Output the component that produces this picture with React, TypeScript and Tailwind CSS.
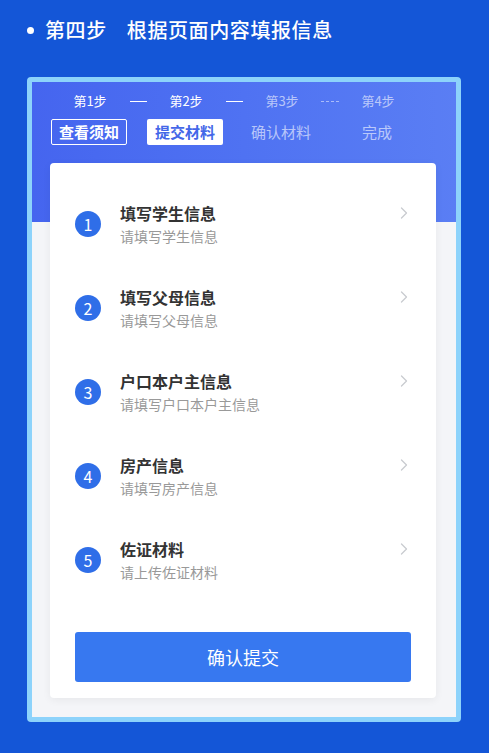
import React from "react";

const items = [
  { n: 1, t: "填写学生信息", s: "请填写学生信息" },
  { n: 2, t: "填写父母信息", s: "请填写父母信息" },
  { n: 3, t: "户口本户主信息", s: "请填写户口本户主信息" },
  { n: 4, t: "房产信息", s: "请填写房产信息" },
  { n: 5, t: "佐证材料", s: "请上传佐证材料" },
];

function Chevron() {
  return (
    <svg width="8" height="12" viewBox="0 0 8 12" fill="none">
      <path d="M1.5 1 L6.5 6 L1.5 11" stroke="#c9cbd0" strokeWidth="1.3" strokeLinecap="round" strokeLinejoin="round" />
    </svg>
  );
}

export default function App() {
  return (
    <div
      className="w-[489px] h-[753px] bg-[#1456d7] overflow-hidden"
      style={{ fontFamily: '"Noto Sans CJK SC", "Noto Sans", sans-serif' }}
    >
      <div className="flex items-center h-[60px] pl-[27px] text-white">
        <span className="w-[7px] h-[7px] rounded-full bg-white mr-[11px]" />
        <span className="text-[20px] font-medium tracking-[0.6px]">第四步</span>
        <span className="text-[20px] font-medium tracking-[0.6px] ml-[20px]">根据页面内容填报信息</span>
      </div>

      <div className="ml-[27px] mt-[17px] w-[434px] h-[645px] rounded-[4px] border-[5px] border-[#8dd3fb] bg-[#f4f5f8] relative overflow-hidden">
        <div className="h-[140px] bg-gradient-to-r from-[#4565ef] via-[#4f72f2] to-[#5a7ef4] pt-[9px]">
          <div className="grid grid-cols-[repeat(7,48px)] items-center ml-[34px] text-[13px] leading-[20px]">
            <span className="text-center text-white">第1步</span>
            <div className="flex justify-center"><div className="w-[17px] h-px bg-white" /></div>
            <span className="text-center text-white">第2步</span>
            <div className="flex justify-center"><div className="w-[17px] h-px bg-white" /></div>
            <span className="text-center text-white/60">第3步</span>
            <div className="flex justify-center"><div className="w-[18px] border-t border-dashed border-white/50" /></div>
            <span className="text-center text-white/60">第4步</span>
          </div>
          <div className="grid grid-cols-[repeat(4,96px)] ml-[9px] mt-[8px] text-[15px]">
            <div className="flex justify-center">
              <span className="h-[26px] px-[7px] border border-white rounded-[2px] text-white font-bold leading-[24px]">查看须知</span>
            </div>
            <div className="flex justify-center">
              <span className="h-[26px] px-[8px] bg-white rounded-[2px] text-[#4467e8] font-bold leading-[26px]">提交材料</span>
            </div>
            <div className="flex justify-center">
              <span className="h-[26px] text-white/60 leading-[26px]">确认材料</span>
            </div>
            <div className="flex justify-center">
              <span className="h-[26px] text-white/60 leading-[26px]">完成</span>
            </div>
          </div>
        </div>

        <div className="absolute left-[18px] top-[81px] w-[386px] h-[535px] bg-white rounded-[4px] shadow-[0_2px_8px_rgba(0,0,0,0.06)] pt-[19px] px-[25px]">
          {items.map((it) => (
            <div key={it.n} className="h-[84px] flex items-center">
              <div className="w-[26px] h-[26px] rounded-full bg-[#2f6ee8] flex items-center justify-center text-white text-[16px] leading-none mr-[19px]">
                {it.n}
              </div>
              <div className="flex-1 flex flex-col">
                <span className="text-[16px] font-bold text-[#333] leading-[22px]">{it.t}</span>
                <span className="text-[14px] text-[#999] leading-[20px] mt-[2px]">{it.s}</span>
              </div>
              <div className="mr-[3px] -mt-[22px]">
                <Chevron />
              </div>
            </div>
          ))}
          <button className="mt-[30px] w-[336px] h-[50px] rounded-[3px] bg-[#3778f0] text-white text-[18px]">
            确认提交
          </button>
        </div>
      </div>
    </div>
  );
}
